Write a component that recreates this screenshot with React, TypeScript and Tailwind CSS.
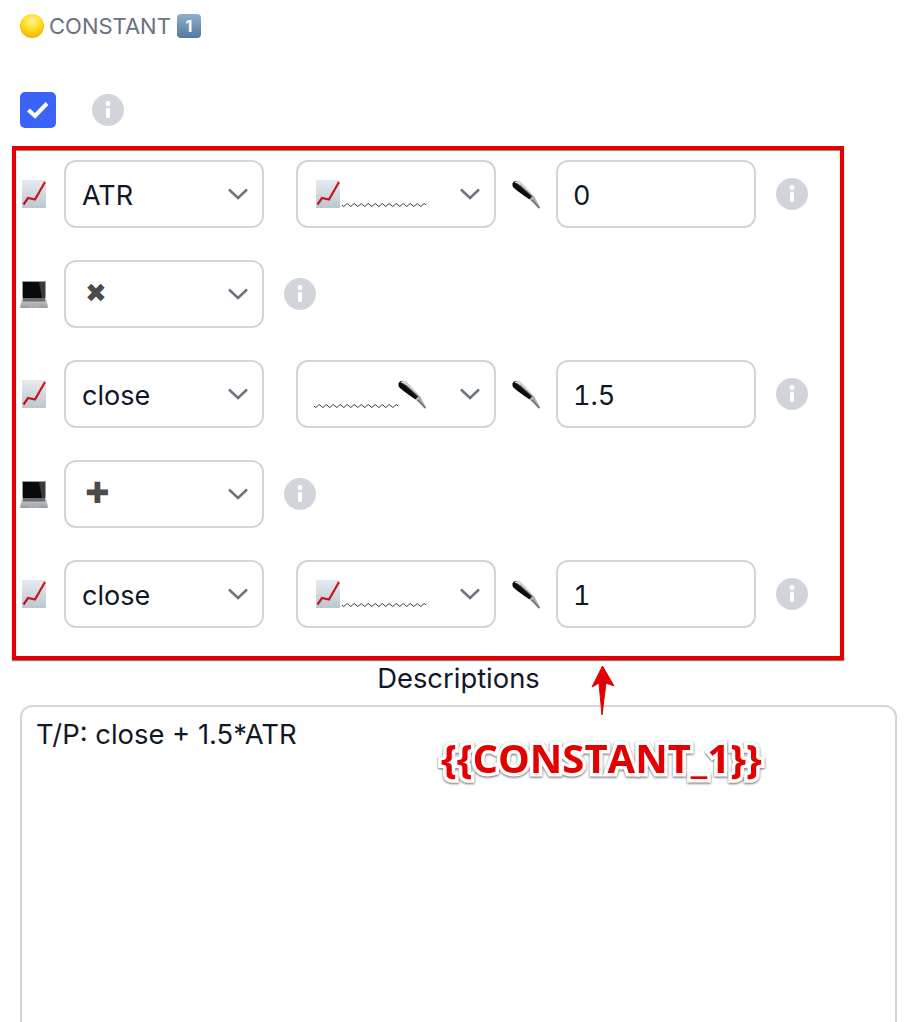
import React from "react";

const ChartEmoji = () => (
  <svg width="24" height="28" viewBox="0 0 24 28" className="shrink-0">
    <defs>
      <linearGradient id="chartBg" x1="0" y1="0" x2="0" y2="1">
        <stop offset="0" stopColor="#e6eaee" />
        <stop offset="1" stopColor="#bcc7d0" />
      </linearGradient>
    </defs>
    <rect width="24" height="28" fill="url(#chartBg)" />
    <path d="M1.500 24.500 L6 18 L13 19.500 L23 2" fill="none" stroke="#c4161c" strokeWidth="2.200" />
  </svg>
);

const LaptopEmoji = () => (
  <svg width="28" height="28" viewBox="0 0 28 28" className="shrink-0">
    <defs>
      <linearGradient id="lapBase" x1="0" y1="0" x2="0" y2="1">
        <stop offset="0" stopColor="#d0d3d5" />
        <stop offset="1" stopColor="#9a9d9f" />
      </linearGradient>
    </defs>
    <path d="M2 1 H26 V19 H2 Z" fill="#9a9da0" />
    <path d="M3 2 H25 V18.500 H3 Z" fill="#0a0a0a" />
    <path d="M19 2 H25 V18 H22 Z" fill="#3a3a3c" />
    <path d="M2 18 H26 L28 27 Q28 28 27 28 H1 Q0 28 0 27 Z" fill="url(#lapBase)" />
    <rect x="3" y="18" width="22" height="3.500" fill="#6a6d6f" />
    <rect x="9" y="23" width="10" height="4.500" fill="#aeb1b3" />
  </svg>
);

const PenEmoji = () => (
  <svg width="28" height="29" viewBox="0 0 28 29" className="shrink-0">
    <defs>
      <linearGradient id="penBody" x1="0" y1="1" x2="1" y2="0">
        <stop offset="0.36" stopColor="#050505" />
        <stop offset="0.52" stopColor="#111111" />
        <stop offset="0.6" stopColor="#e8e8e8" />
        <stop offset="0.68" stopColor="#888888" />
      </linearGradient>
    </defs>
    <path d="M0.500 3.500 Q2 0 6 0.500 Q9 1.500 21.500 15.500 L17.500 19.500 Q5 11 1.500 7.500 Q0 5.500 0.500 3.500 Z" fill="url(#penBody)" />
    <path d="M3 2.500 Q5.500 2 8 4.500" fill="none" stroke="#dfe1e3" strokeWidth="1.200" />
    <path d="M17.500 19.500 L21.500 15.500 L28 27 L27 29 Z" fill="#a6a8aa" />
    <path d="M20 20 L27.500 28" stroke="#3c3c3c" strokeWidth="0.900" />
  </svg>
);

const Wave = () => (
  <svg width="84" height="6" viewBox="0 0 84 6" className="shrink-0">
    <path
      d="M0 2 q1.750 3 3.500 0 t3.500 0 t3.500 0 t3.500 0 t3.500 0 t3.500 0 t3.500 0 t3.500 0 t3.500 0 t3.500 0 t3.500 0 t3.500 0 t3.500 0 t3.500 0 t3.500 0 t3.500 0 t3.500 0 t3.500 0 t3.500 0 t3.500 0 t3.500 0 t3.500 0 t3.500 0 t3.500 0"
      fill="none"
      stroke="#333"
      strokeWidth="1"
    />
  </svg>
);

const InfoDot = () => (
  <svg width="32" height="32" viewBox="0 0 32 32" className="shrink-0">
    <circle cx="16" cy="16" r="16" fill="#d1d5db" />
    <circle cx="16" cy="9.500" r="2.500" fill="#fff" />
    <rect x="14" y="14" width="4" height="10" rx="1.500" fill="#fff" />
  </svg>
);

const Chevron = () => (
  <svg width="20" height="12" viewBox="0 0 20 12" className="shrink-0">
    <path d="M1 1.500 L10 10 L19 1.500" fill="none" stroke="#6b7280" strokeWidth="2.500" />
  </svg>
);

const Select = ({ children, pad = "pl-4" }: { children: React.ReactNode; pad?: string }) => (
  <div className={`w-[200px] h-[68px] shrink-0 rounded-xl border-2 border-gray-300 flex items-center justify-between pr-[14px] ${pad}`}>
    {children}
    <Chevron />
  </div>
);

const ValueRow = ({ name, second, pad, value }: { name: string; second: React.ReactNode; pad: string; value: string }) => (
  <div className="flex items-center h-[68px]">
    <div className="w-[44px] flex pl-[2px]">
      <ChartEmoji />
    </div>
    <Select>
      <span className="pt-[4px]">{name}</span>
    </Select>
    <div className="ml-8">
      <Select pad={pad}>{second}</Select>
    </div>
    <div className="ml-4">
      <PenEmoji />
    </div>
    <input
      readOnly
      value={value}
      className="ml-4 w-[200px] h-[68px] rounded-xl border-2 border-gray-300 pl-[15px] pt-[2px] outline-none tabular-nums"
    />
    <div className="ml-5">
      <InfoDot />
    </div>
  </div>
);

const OperatorRow = ({ op, size }: { op: string; size: string }) => (
  <div className="flex items-center h-[68px]">
    <div className="w-[44px] flex">
      <LaptopEmoji />
    </div>
    <Select>
      <span className={`font-['DejaVu_Sans',sans-serif] text-[#4b4b4b] leading-none pl-[3px] pb-[2px] ${size}`}>{op}</span>
    </Select>
    <div className="ml-5">
      <InfoDot />
    </div>
  </div>
);

const chartWave = (
  <div className="flex items-end h-[28px]">
    <ChartEmoji />
    <div className="ml-[2px] mb-[-1px]">
      <Wave />
    </div>
  </div>
);

const wavePen = (
  <div className="flex items-end h-[29px]">
    <div className="mb-[-1px]">
      <Wave />
    </div>
    <PenEmoji />
  </div>
);

export default function App() {
  return (
    <div className="relative h-[1022px] overflow-hidden bg-white px-5 font-['Inter',sans-serif] text-[27px] text-gray-900">
      <div className="flex items-center h-[24px] mt-[14px]">
        <svg width="24" height="24" viewBox="0 0 24 24">
          <defs>
            <radialGradient id="sun" cx="0.5" cy="0.3" r="0.75">
              <stop offset="0" stopColor="#fff6a0" />
              <stop offset="0.5" stopColor="#ffdc1e" />
              <stop offset="1" stopColor="#f0a800" />
            </radialGradient>
          </defs>
          <circle cx="12" cy="12" r="12" fill="url(#sun)" />
        </svg>
        <span className="ml-[5px] text-[22px] leading-none text-gray-500">CONSTANT</span>
        <div className="ml-[6px] w-6 h-6 rounded-[4px] bg-gradient-to-b from-[#8fb0cc] to-[#50799f] flex items-center justify-center text-white text-[16px] font-bold leading-none">
          1
        </div>
      </div>

      <div className="flex items-center mt-[54px]">
        <div className="w-9 h-9 rounded-[5px] bg-[#3b64f6] flex items-center justify-center">
          <svg width="22" height="18" viewBox="0 0 22 18">
            <path d="M1.500 9 L8 15 L20 2.500" fill="none" stroke="#fff" strokeWidth="4" />
          </svg>
        </div>
        <div className="ml-9">
          <InfoDot />
        </div>
      </div>

      <div className="flex flex-col gap-8 mt-8">
        <ValueRow name="ATR" second={chartWave} pad="pl-[18px]" value="0" />
        <OperatorRow op="✖" size="text-[26px]" />
        <ValueRow name="close" second={wavePen} pad="pl-4" value="1.5" />
        <OperatorRow op="✚" size="text-[29px]" />
        <ValueRow name="close" second={chartWave} pad="pl-[18px]" value="1" />
      </div>

      <div className="w-[877px] text-center mt-[34px] h-[32px] leading-[32px] text-[27.4px]">Descriptions</div>
      <textarea
        readOnly
        value="T/P: close + 1.5*ATR"
        className="block mt-[11px] w-[877px] h-[400px] rounded-xl border-2 border-gray-300 px-[14px] py-[10px] leading-[34px] text-[27.4px] outline-none resize-none"
      />

      {/* annotation drawn on top of the screenshot */}
      <div className="absolute left-[12px] top-[146px] w-[832px] h-[514px] border-4 border-[#e30000] shadow-[0_1px_1px_rgba(0,0,0,0.5),inset_0_1px_1px_rgba(0,0,0,0.5)] pointer-events-none" />
      <svg width="26" height="52" viewBox="0 0 26 52" className="absolute left-[590px] top-[665px]">
        <path d="M12.500 1 L24 21 L16 18 L12 50 L9 18 L2 22 Z" fill="#e30000" stroke="#e30000" strokeWidth="1" strokeLinejoin="round" />
      </svg>
      <div className="absolute left-[441px] top-[733px] font-['Open_Sans',sans-serif] font-bold text-[40px] leading-[50px] text-[#e30000] [-webkit-text-stroke:7px_white] [paint-order:stroke_fill] drop-shadow-[0_1px_1px_rgba(0,0,0,0.6)] whitespace-nowrap">
        {"{{CONSTANT_1}}"}
      </div>
    </div>
  );
}
